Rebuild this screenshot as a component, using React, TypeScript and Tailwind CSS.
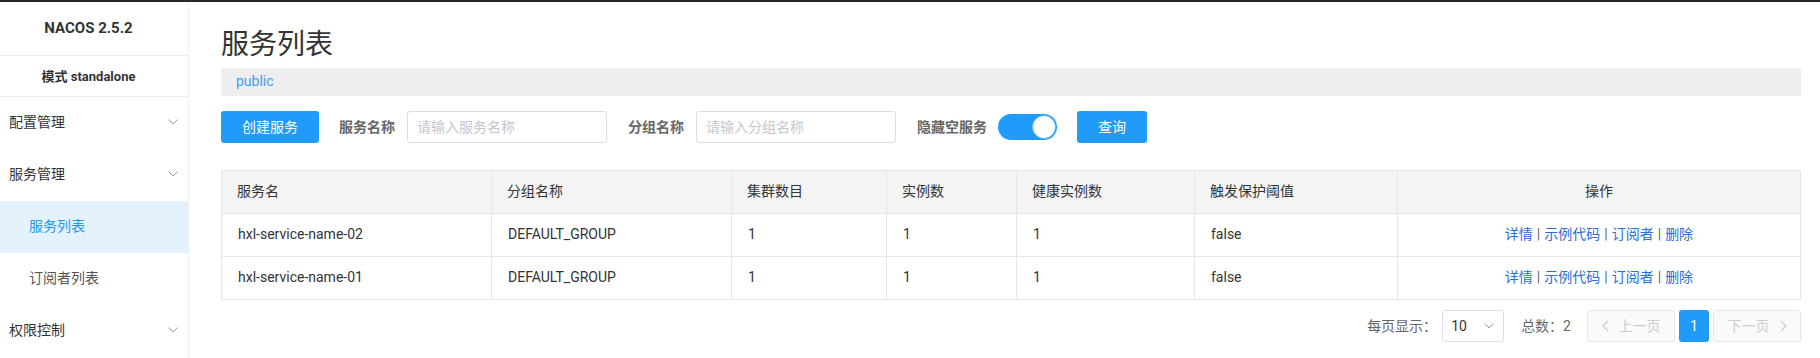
import React from 'react'

const font = { fontFamily: 'Roboto, "Noto Sans CJK SC", sans-serif' }

function Chevron({ className = '' }: { className?: string }) {
  return (
    <svg className={className} width="10" height="6" viewBox="0 0 10 6" fill="none" stroke="currentColor" strokeWidth={1}>
      <path d="M0.5 0.5 L5 5 L9.5 0.5" />
    </svg>
  )
}

const rows = [
  { name: 'hxl-service-name-02', group: 'DEFAULT_GROUP', clusters: '1', instances: '1', healthy: '1', threshold: 'false' },
  { name: 'hxl-service-name-01', group: 'DEFAULT_GROUP', clusters: '1', instances: '1', healthy: '1', threshold: 'false' },
]

const cols = 'grid grid-cols-[270px_240px_155px_130px_178px_203px_1fr]'

function Sidebar() {
  return (
    <aside className="w-[189px] shrink-0 border-r border-[#eee] text-[14px] text-[#333]">
      <div className="h-[54px] border-b border-[#eee] flex items-center justify-center pr-[11px] font-bold text-[15px]">NACOS 2.5.2</div>
      <div className="h-[41px] border-b border-[#eee] flex items-center justify-center pr-[11px] pt-[1px] font-bold text-[13px]">模式 standalone</div>
      <div className="h-[52px] flex items-center justify-between pl-[9px] pr-[10px] pb-[2px]">
        <span>配置管理</span>
        <Chevron className="text-[#999]" />
      </div>
      <div className="h-[52px] flex items-center justify-between pl-[9px] pr-[10px] pb-[2px]">
        <span>服务管理</span>
        <Chevron className="text-[#999]" />
      </div>
      <div className="h-[52px] flex items-center pl-[29px] pb-[2px] bg-[#e3f2fd] text-[#209bfa]">服务列表</div>
      <div className="h-[52px] flex items-center pl-[29px] pb-[2px] text-[#555]">订阅者列表</div>
      <div className="h-[52px] flex items-center justify-between pl-[9px] pr-[10px] pb-[2px]">
        <span>权限控制</span>
        <Chevron className="text-[#999]" />
      </div>
    </aside>
  )
}

function Toolbar() {
  return (
    <div className="mt-[15px] h-[32px] flex items-center text-[14px]">
      <button type="button" className="w-[98px] h-[32px] rounded-[3px] bg-[#209bfa] text-white">创建服务</button>
      <span className="ml-[20px] font-bold text-[#666]">服务名称</span>
      <input
        placeholder="请输入服务名称"
        className="ml-[12px] w-[200px] h-[32px] rounded-[3px] border border-[#dcdee3] pl-[9px] placeholder:text-[#c4c6cf] outline-none"
      />
      <span className="ml-[21px] font-bold text-[#666]">分组名称</span>
      <input
        placeholder="请输入分组名称"
        className="ml-[12px] w-[200px] h-[32px] rounded-[3px] border border-[#dcdee3] pl-[9px] placeholder:text-[#c4c6cf] outline-none"
      />
      <span className="ml-[21px] font-bold text-[#666]">隐藏空服务</span>
      <div className="ml-[11px] w-[59px] h-[26px] rounded-full bg-[#209bfa] flex items-center justify-end pr-[1px]">
        <div className="w-[24px] h-[24px] rounded-full bg-white border border-[#5db4f7]" />
      </div>
      <button type="button" className="ml-[20px] w-[70px] h-[32px] rounded-[3px] bg-[#209bfa] text-white">查询</button>
    </div>
  )
}

function ServiceTable() {
  const head = ['服务名', '分组名称', '集群数目', '实例数', '健康实例数', '触发保护阈值']
  return (
    <div className="mt-[27px] border border-[#e6e6e6] text-[14px] text-[#333]">
      <div className={`${cols} h-[43px] bg-[#f4f4f4] border-b border-[#e6e6e6]`}>
        {head.map((h) => (
          <div key={h} className="flex items-center pl-[15px] pb-[1px] border-r border-[#e6e6e6]">{h}</div>
        ))}
        <div className="flex items-center justify-center pb-[1px]">操作</div>
      </div>
      {rows.map((r, i) => (
        <div key={r.name} className={`${cols} ${i < rows.length - 1 ? 'h-[43px] border-b border-[#e6e6e6]' : 'h-[42px]'}`}>
          {[r.name, r.group, r.clusters, r.instances, r.healthy, r.threshold].map((v, j) => (
            <div key={j} className="flex items-center pl-[16px] pb-[2px] border-r border-[#e6e6e6]">{v}</div>
          ))}
          <div className="flex items-center justify-center pb-[2px] text-[#2a6fd6]">
            <span>详情</span>
            <span className="mx-[4px] text-[#666]">|</span>
            <span>示例代码</span>
            <span className="mx-[4px] text-[#666]">|</span>
            <span>订阅者</span>
            <span className="mx-[4px] text-[#666]">|</span>
            <span>删除</span>
          </div>
        </div>
      ))}
    </div>
  )
}

function Pagination() {
  return (
    <div className="mt-[10px] h-[32px] flex items-center justify-end text-[14px] text-[#666]">
      <span>每页显示：</span>
      <div className="ml-[5px] w-[62px] h-[32px] rounded-[3px] border border-[#dcdee3] flex items-center justify-between pl-[8px] pr-[9px] text-[#333]">
        <span>10</span>
        <Chevron className="text-[#999]" />
      </div>
      <span className="ml-[17px]">总数：2</span>
      <button type="button" className="ml-[16px] w-[88px] h-[32px] rounded-[3px] border border-[#e6e6e6] bg-[#fafafa] text-[#ccc] flex items-center justify-center gap-[10px]">
        <svg width="7" height="12" viewBox="0 0 7 12" fill="none" stroke="currentColor" strokeWidth={1.2}><path d="M6 1 L1 6 L6 11" /></svg>
        <span>上一页</span>
      </button>
      <button type="button" className="ml-[4px] w-[30px] h-[32px] rounded-[3px] bg-[#209bfa] text-white">1</button>
      <button type="button" className="ml-[4px] w-[88px] h-[32px] rounded-[3px] border border-[#e6e6e6] bg-[#fafafa] text-[#ccc] flex items-center justify-center gap-[10px]">
        <span>下一页</span>
        <svg width="7" height="12" viewBox="0 0 7 12" fill="none" stroke="currentColor" strokeWidth={1.2}><path d="M1 1 L6 6 L1 11" /></svg>
      </button>
    </div>
  )
}

export default function App() {
  return (
    <div className="w-[1820px] h-[358px] bg-white overflow-hidden flex flex-col" style={font}>
      <div className="h-[2px] bg-[#24292e] shrink-0" />
      <div className="flex flex-1">
        <Sidebar />
        <main className="flex-1 pl-[32px] pr-[19px]">
          <h1 className="mt-[23px] h-[40px] leading-[40px] text-[28px] text-[#333]">服务列表</h1>
          <div className="mt-[3px] h-[28px] bg-[#eee] flex items-center pl-[15px] pb-[1px] text-[14px] text-[#3d9cf2]">public</div>
          <Toolbar />
          <ServiceTable />
          <Pagination />
        </main>
      </div>
    </div>
  )
}
